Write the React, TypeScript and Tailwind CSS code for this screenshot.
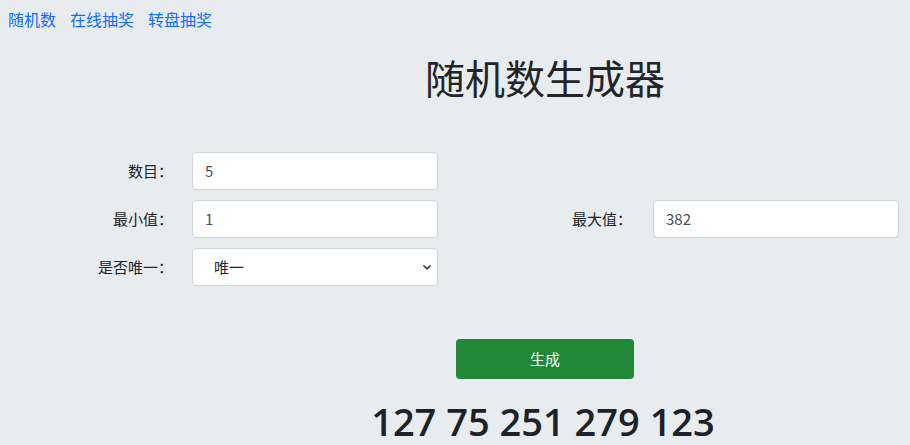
import React from "react";

const cjk = { fontFamily: '"Noto Sans CJK SC", "Noto Sans", sans-serif' };

function Field({ value }: { value: string }) {
  return (
    <div className="w-[246px] h-[38px] bg-white border border-[#ced4da] rounded-[4px] flex items-center px-[12px] text-[15px] text-[#495057]" style={cjk}>
      {value}
    </div>
  );
}

export default function App() {
  return (
    <div className="w-[910px] h-[445px] bg-[#e9ecef] overflow-hidden text-[#212529]" style={cjk}>
      <nav className="flex gap-[14px] pl-[8px] pt-[7px] text-[16px] leading-[24px] text-[#0d6efd]">
        <span>随机数</span>
        <span>在线抽奖</span>
        <span>转盘抽奖</span>
      </nav>
      <div className="flex flex-col">
        <h1 className="ml-[180px] text-center text-[40px] leading-[48px] mt-[22px]">随机数生成器</h1>
        <div className="mt-[51px] flex flex-col gap-[10px]">
          <div className="flex items-center">
            <label className="w-[173px] text-right text-[15px]">数目：</label>
            <div className="ml-[19px]"><Field value="5" /></div>
          </div>
          <div className="flex items-center">
            <label className="w-[173px] text-right text-[15px]">最小值：</label>
            <div className="ml-[19px]"><Field value="1" /></div>
            <label className="w-[194px] text-right text-[15px]">最大值：</label>
            <div className="ml-[21px]"><Field value="382" /></div>
          </div>
          <div className="flex items-center">
            <label className="w-[173px] text-right text-[15px]">是否唯一：</label>
            <div className="ml-[19px] w-[246px] h-[38px] bg-white border border-[#ced4da] rounded-[4px] flex items-center justify-between pl-[21px] pr-[5px] text-[15px] text-[#212529]">
              <span>唯一</span>
              <svg width="10" height="10" viewBox="0 0 16 16" fill="none" stroke="#343a40" strokeWidth="2.5" strokeLinecap="round" strokeLinejoin="round">
                <path d="M3 6l5 5 5-5" />
              </svg>
            </div>
          </div>
        </div>
        <div className="ml-[180px] flex justify-center mt-[53px]">
          <button className="w-[178px] h-[40px] bg-[#218838] rounded-[4px] text-white text-[15px]">生成</button>
        </div>
        <div className="ml-[176px] text-center text-[38px] leading-[48px] mt-[18px] font-semibold text-[#1c2229]" style={{ fontFamily: '"Open Sans", "Noto Sans", sans-serif' }}>
          127 75 251 279 123
        </div>
      </div>
    </div>
  );
}
